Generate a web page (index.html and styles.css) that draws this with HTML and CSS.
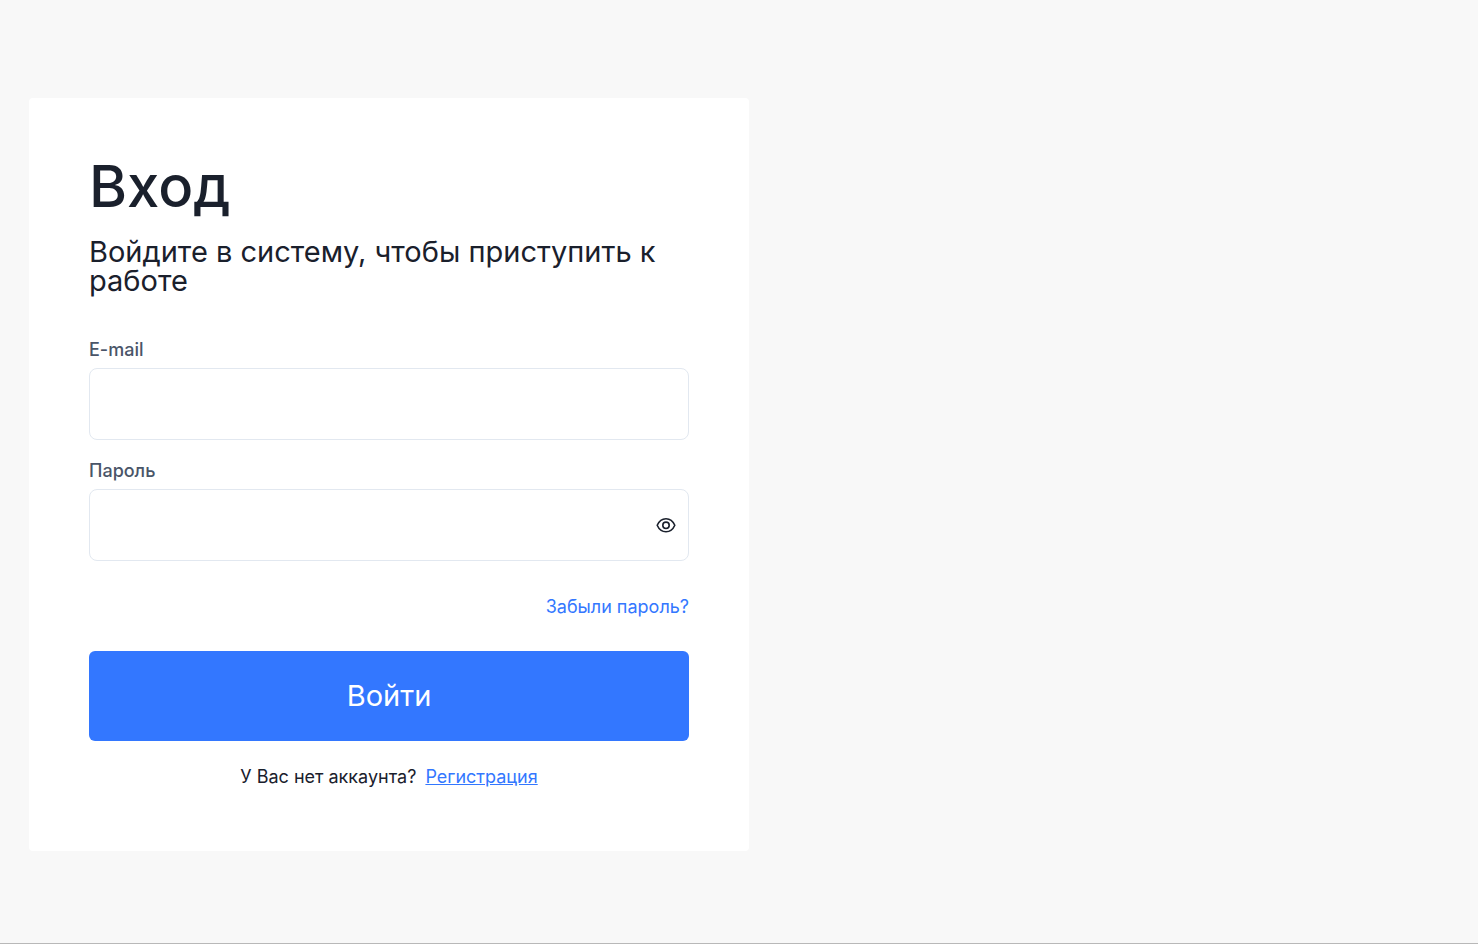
FILE: index.html
```
<!DOCTYPE html>
<html lang="ru">
<head>
    <meta charset="UTF-8">
    <meta name="viewport" content="width=device-width, initial-scale=1.0">
    <title>Вход</title>
    <link rel="stylesheet" href="styles.css">
</head>
<body>
    <main class="page">
        <section class="card">
            <h1 class="title">Вход</h1>
            <p class="subtitle">Войдите в систему, чтобы приступить к работе</p>
            <form class="form" action="#">
                <div class="field">
                    <label class="label" for="email">E-mail</label>
                    <input class="input" type="email" id="email" name="email">
                </div>
                <div class="field">
                    <label class="label" for="password">Пароль</label>
                    <div class="password">
                        <input class="input" type="password" id="password" name="password">
                        <button class="eye" type="button" aria-label="Показать пароль" onclick="togglePassword()">
                            <svg width="20" height="20" viewBox="0 0 20 20" fill="none" stroke="#1a202c" stroke-width="1.6">
                                <path d="M1.2 10.3C3 6.2 6.2 3.8 10 3.8S17 6.2 18.8 10.3C17 14.4 13.8 16.8 10 16.8S3 14.4 1.2 10.3Z" stroke-linejoin="round"/>
                                <circle cx="10" cy="10.3" r="3.2"/>
                            </svg>
                        </button>
                    </div>
                </div>
                <a class="forgot" href="#">Забыли пароль?</a>
                <button class="submit" type="submit">Войти</button>
            </form>
            <p class="register">
                <span>У Вас нет аккаунта?</span>
                <a class="register-link" href="#">Регистрация</a>
            </p>
        </section>
    </main>

    <script>
        function togglePassword() {
            var input = document.getElementById('password');
            input.type = input.type === 'password' ? 'text' : 'password';
        }
    </script>
</body>
</html>
```
FILE: styles.css
```
* {
    box-sizing: border-box;
}
body {
    margin: 0;
    background-color: #f8f8f8;
    color: #1a202c;
    font-family: Inter, sans-serif;
    font-size: 18px;
}
.page {
    display: flex;
    align-items: center;
    min-height: 100vh;
    padding: 30px 29px 25px;
    border-bottom: 1px solid #b8b8b8;
}
.card {
    width: 100%;
    max-width: 720px;
    padding: 60px;
    background-color: #fff;
    border-radius: 4px;
}
.title {
    margin: 0 0 23px;
    font-size: 58px;
    font-weight: 500;
    line-height: 56px;
}
.subtitle {
    margin: 0 0 44px;
    font-size: 29px;
    line-height: 29px;
}
.form {
    display: flex;
    flex-direction: column;
}
.field {
    display: flex;
    flex-direction: column;
    gap: 7px;
    margin-bottom: 20px;
}
.label {
    color: #4a5568;
    font-weight: 500;
    line-height: 22px;
}
.input {
    width: 100%;
    height: 72px;
    padding: 0 20px;
    border: 1px solid #e2e8f0;
    border-radius: 8px;
    background-color: #fff;
    color: inherit;
    font: inherit;
}
.password {
    position: relative;
}
.password .input {
    padding-right: 48px;
}
.eye {
    position: absolute;
    top: 0;
    right: 0;
    bottom: 0;
    display: flex;
    align-items: center;
    padding: 0 13px;
    border: none;
    background: none;
    cursor: pointer;
}
.forgot {
    align-self: flex-end;
    margin: 15px 0 33px;
    color: #3377ff;
    line-height: 22px;
    text-decoration: none;
}
.submit {
    height: 90px;
    border: none;
    border-radius: 6px;
    background-color: #3377ff;
    color: #fff;
    font-family: inherit;
    font-size: 29px;
    cursor: pointer;
}
.register {
    display: flex;
    justify-content: center;
    gap: 9px;
    margin: 22px 0 0;
    line-height: 28px;
}
.register-link {
    color: #3377ff;
}
```
